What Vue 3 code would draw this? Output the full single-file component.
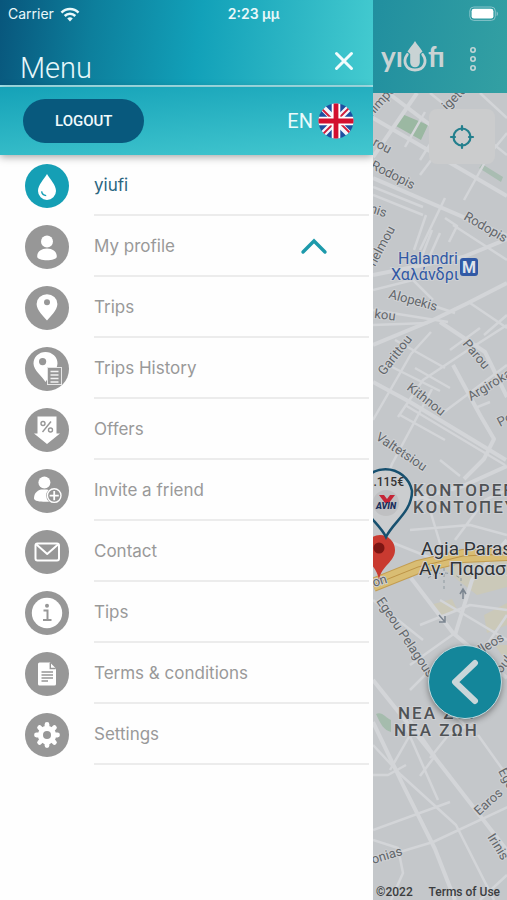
<template>
  <div class="page">
    <!-- Status Bar -->
    <div class="statusBar">
      <span class="carrier">
        Carrier
        <svg width="20" height="15" viewBox="0 0 20 15" fill="none" stroke="#e9f8fa" stroke-width="2.6">
          <path d="M1.5 5.6a12 12 0 0 1 17 0" />
          <path d="M4.7 9a7.5 7.5 0 0 1 10.6 0" />
          <path d="M10 14.4 7.2 11.5a4 4 0 0 1 5.6 0z" fill="#e9f8fa" stroke="none" />
        </svg>
      </span>
      <span class="clock">2:23 μμ</span>
      <svg class="battery" width="30" height="16" viewBox="0 0 30 16">
        <rect x="0.8" y="1" width="25.5" height="13.4" rx="4" fill="none" stroke="#86c3ca" />
        <rect x="2.6" y="2.8" width="21.8" height="9.8" rx="2.4" fill="#fff" />
        <path d="M27.6 5.4c1.8.6 1.8 4 0 4.6z" fill="#86c3ca" />
      </svg>
    </div>

    <!-- Drawer -->
    <aside class="drawer">
      <header class="drawerHeader">
        <h1>Menu</h1>
        <button class="iconButton" type="button" aria-label="Close menu">
          <svg width="20" height="20" viewBox="0 0 20 20" fill="none" stroke="#f2fcfd" stroke-width="3" stroke-linecap="round">
            <path d="M2.5 2.5l15 15M17.5 2.5l-15 15" />
          </svg>
        </button>
      </header>

      <div class="account">
        <button class="logout" type="button">LOGOUT</button>
        <button class="language" type="button">
          EN
          <svg width="36" height="36" viewBox="0 0 36 36">
            <clipPath id="flag"><circle cx="18" cy="18" r="17.5" /></clipPath>
            <g clip-path="url(#flag)">
              <path d="M0 0h36v36H0z" fill="#1d4fa0" />
              <path d="M2 2l32 32M34 2L2 34" stroke="#f3f6fb" stroke-width="6.4" />
              <path d="M3 5l12 12M21 19l13 13M33 3L21 15M15 21L3 33" stroke="#d01f3c" stroke-width="1.8" />
              <path d="M18 0v36M0 18h36" stroke="#fff" stroke-width="8.6" />
              <path d="M18 0v36M0 18h36" stroke="#d3102f" stroke-width="4.8" />
            </g>
          </svg>
        </button>
      </div>

      <nav>
        <ul class="menu">
          <li v-for="item in items" :key="item.icon">
            <svg class="menuIcon" :class="{ menuIconActive: item.active }" viewBox="0 0 44 44">
              <circle class="disc" cx="22" cy="22" r="22" />
              <g v-if="item.icon === 'drop'">
                <path class="glyph" d="M22 10c3 5 9 11 9 17a9 9 0 0 1-18 0c0-6 6-12 9-17z" />
                <path class="cut" d="M16.6 27.4c.4 2.6 2 4 4.6 4.2" />
              </g>
              <g v-else-if="item.icon === 'profile'" class="glyph">
                <circle cx="22" cy="16.4" r="6" />
                <path d="M12.2 31.5c0-5 4.2-8 9.8-8s9.8 3 9.8 8c0 5-19.6 5-19.6 0z" />
              </g>
              <g v-else-if="item.icon === 'pin'">
                <path class="glyph" d="M22 34.5c-3-4-10.4-10.4-10.4-16.6a10.4 9.6 0 0 1 20.8 0c0 6.2-7.4 12.6-10.4 16.6z" />
                <circle class="hole" cx="22" cy="16.2" r="3" />
              </g>
              <g v-else-if="item.icon === 'history'">
                <path class="glyph" d="M20.5 35c-3-5.5-12-11.5-12-18.5a12 11.5 0 0 1 24 0c0 7-9 13-12 18.5z" />
                <circle class="hole" cx="17.6" cy="14.6" r="3.6" />
                <rect x="22.5" y="20.5" width="14" height="17" fill="#979797" stroke="#e6e6e6" />
                <path d="M25.5 24.5h8M25.5 28h8M25.5 31.5h8M25.5 35h8" stroke="#f2f2f2" stroke-width="1.5" />
              </g>
              <g v-else-if="item.icon === 'offers'">
                <path class="glyph" d="M12.5 8.5h19v17H35L22 36 9 25.5h3.5z" />
                <g class="cut">
                  <circle cx="18" cy="15.5" r="2" />
                  <circle cx="25.5" cy="22" r="2" />
                  <path d="M26 13.5l-8.500 10.500" />
                </g>
              </g>
              <g v-else-if="item.icon === 'invite'">
                <circle class="glyph" cx="19.4" cy="13.6" r="6" />
                <path class="glyph" d="M9 29.5c0-5 2.5-7.5 7-9h6c3 1 5 2 7 5l-3 7c-6 .5-17 .5-17-3z" />
                <circle class="hole" cx="29.2" cy="26.6" r="8" />
                <circle cx="29.2" cy="26.6" r="6.8" fill="#979797" stroke="#fff" stroke-width="1.4" />
                <path d="M29.2 22v9.2M24.6 26.6h9.2" stroke="#fff" stroke-width="1.8" />
              </g>
              <g v-else-if="item.icon === 'contact'" fill="none" stroke="#fff" stroke-width="2" stroke-linejoin="round">
                <rect x="10.5" y="13.5" width="23.5" height="17" rx="2" />
                <path d="M11.5 14.5L22.2 24 33 14.5" />
              </g>
              <g v-else-if="item.icon === 'tips'">
                <circle class="glyph" cx="22" cy="22" r="15.2" />
                <circle class="hole" cx="22" cy="14.8" r="2" />
                <path d="M18.5 19.5h4v9M18 29h8.500" fill="none" stroke="#979797" stroke-width="2" />
              </g>
              <g v-else-if="item.icon === 'terms'">
                <path class="glyph" d="M14.5 10.5H25l6 6V32a1.5 1.5 0 0 1-1.5 1.5h-15A1.5 1.5 0 0 1 13 32V12a1.5 1.5 0 0 1 1.5-1.500z" />
                <path class="cut" d="M25.3 11v5.500h5.500M16.500 20H28M16.500 23H28M16.500 26H28M16.500 29H23" />
              </g>
              <g v-else>
                <path d="M22 11.500v21M11.500 22h21M14.600 14.600l14.800 14.800M29.400 14.600L14.600 29.400" stroke="#fff" stroke-width="4.800" stroke-linecap="round" />
                <circle class="glyph" cx="22" cy="22" r="9.200" />
                <circle class="hole" cx="22" cy="22" r="4" />
              </g>
            </svg>
            <button v-if="item.expandable" class="menuLabel" type="button" aria-expanded="false">
              {{ item.label }}
              <svg width="28" height="18" viewBox="0 0 28 18" fill="none" stroke="#1d9aab" stroke-width="3.4" stroke-linecap="round">
                <path d="M3 15L14 4l11 11" />
              </svg>
            </button>
            <a v-else class="menuLabel" :class="{ menuLabelActive: item.active }" href="#">{{ item.label }}</a>
          </li>
        </ul>
      </nav>
    </aside>

    <!-- Map behind the drawer -->
    <main class="content">
      <header class="appBar">
        <svg width="64" height="36" viewBox="0 0 64 36" role="img" aria-label="yiufi">
          <g class="logoText">
            <text x="0" y="26">yı</text>
            <text x="47" y="26">fı</text>
          </g>
          <path d="M34 0c2 3.500 5.500 7 7.500 10.500L38.800 13v8.500a4.800 4.800 0 0 1-9.600 0V13l-2.700-2.500C28.500 7 32 3.500 34 0z" fill="#c9d3d4" />
          <path d="M26.300 13.500c-5 7-1.500 15.500 7.700 15.500s12.700-8.500 7.700-15.500" fill="none" stroke="#c9d3d4" stroke-width="2.800" stroke-linecap="round" />
        </svg>
        <button class="iconButton" type="button" aria-label="More">
          <svg width="8" height="26" viewBox="0 0 8 26" fill="none" stroke="#c3d5d6" stroke-width="1.6">
            <circle cx="4" cy="4" r="2.200" />
            <circle cx="4" cy="13" r="2.200" />
            <circle cx="4" cy="22" r="2.200" />
          </svg>
        </button>
      </header>

      <div class="map">
        <svg class="mapCanvas" viewBox="373 93 134 807" preserveAspectRatio="xMinYMin slice">
          <path d="M396 126l6-12 26 11-7 15z" fill="#9bb8a2" />
          <path d="M482 164l21 13-2 5-22-14z" fill="#a9bdb2" />
          <path d="M376 714c6-3 10 4 15 6v12c-7-2-10-7-15-18z" fill="#a5bcad" />
          <path d="M440 565l67-8v30l-30 8-18-14zM430 605l22-6 6 12-18 6zM484 615l23-12v22l-20 8zM495 645h12v18z" fill="#cbc9b9" />
          <g class="roads">
            <path v-for="(road, i) in minorRoads" :key="i" :d="road" />
          </g>
          <g class="roads roadsWide">
            <path v-for="(road, i) in mainRoads" :key="i" :d="road" />
          </g>
          <path class="highwayEdge" d="M373 585l45-18 45-11 44-2" />
          <path class="highway" d="M373 585l45-18 45-11 44-2" />
          <path d="M373 585l45-18 45-11 44-2" fill="none" stroke="#bd9448" />
          <path d="M444 568v24M461 566v20M428 578q16-10 32 0" fill="none" stroke="#8f9aa0" stroke-dasharray="3 3" />
          <path d="M439 615l6 7m0-6v6h-6M463 599v-9m-3 4l3-5 3 5" fill="none" stroke="#7b8590" stroke-width="1.5" />

          <text
            v-for="street in streets"
            :key="street.name + street.x"
            class="street"
            :transform="`translate(${street.x} ${street.y}) rotate(${street.angle})`"
          >{{ street.name }}</text>

          <g class="metro">
            <text x="398" y="264">Halandri</text>
            <text x="391" y="280">Χαλάνδρι</text>
            <rect x="460" y="258" width="18" height="18" rx="3" />
            <text class="metroSign" x="469" y="273">M</text>
          </g>
          <g class="district">
            <text x="413" y="496">KONTOPEFKO</text>
            <text x="413" y="513">ΚΟΝΤΟΠΕΥΚΟ</text>
            <text x="398" y="719">NEA ZOI</text>
            <text x="394" y="736">ΝΕΑ ΖΩΗ</text>
          </g>
          <g class="suburb">
            <text x="421" y="555">Agia Paraskevi</text>
            <text x="419" y="575">Αγ. Παρασκευή</text>
          </g>

          <path d="M379 580c-2-14-14-18-14-30a15 15 0 0 1 30 0c0 12-14 16-16 30z" fill="#c93a30" />
          <circle cx="379" cy="548" r="5.500" fill="#7d1613" />
          <path d="M386 537c-7-15-27-25-27-46a27 27 0 0 1 53 0c0 21-19 31-26 46z" fill="#cbcdcf" stroke="#17506f" stroke-width="2.500" />
          <circle cx="386" cy="503" r="13" fill="#bfc0c2" />
          <path d="M379 495h5l3 4 3-4h5l-6 8h-4z" fill="#c52536" />
          <text class="brand" x="386" y="509">AVIN</text>
          <text class="price" x="404" y="486">1.115€</text>
        </svg>

        <button class="locate" type="button" aria-label="My location">
          <svg width="26" height="26" viewBox="0 0 26 26" fill="none" stroke="#237f8d" stroke-width="2.200" stroke-linecap="round">
            <circle cx="13" cy="13" r="8.500" />
            <path d="M13 2v4M13 20v4M2 13h4M20 13h4" />
          </svg>
        </button>
        <button class="back" type="button" aria-label="Back">
          <svg width="30" height="46" viewBox="0 0 30 46" fill="none" stroke="#c9d6d9" stroke-width="6" stroke-linecap="round" stroke-linejoin="round">
            <path d="M25 4L5 23l20 19" />
          </svg>
        </button>
        <footer class="mapFooter">
          <span>©2022</span>
          <a href="#">Terms of Use</a>
        </footer>
      </div>
    </main>
  </div>
</template>

<script setup>
const items = [
  { icon: "drop", label: "yiufi", active: true },
  { icon: "profile", label: "My profile", expandable: true },
  { icon: "pin", label: "Trips" },
  { icon: "history", label: "Trips History" },
  { icon: "offers", label: "Offers" },
  { icon: "invite", label: "Invite a friend" },
  { icon: "contact", label: "Contact" },
  { icon: "tips", label: "Tips" },
  { icon: "terms", label: "Terms & conditions" },
  { icon: "settings", label: "Settings" },
];

const mainRoads = [
  "M373 157l44-64",
  "M388 93l45 34",
  "M373 118l134 78",
  "M373 178l134 58",
  "M373 275l90-18 44-18",
  "M373 345l60-25 35-17 39-20",
  "M440 322l45 30 22 45",
  "M373 382l37 20 96 58",
  "M453 365l27 50 14 24-10 20-20 20",
  "M373 510l90-24 44-20",
  "M373 680l60 75 76 98 25 40",
  "M411 578l42 55 54 45",
  "M455 635l17-55 35-40",
  "M373 722l30 63 32 64 20 51",
];

const minorRoads = [
  "M405 147l20-35M420 175l30-40M455 105l-35 55M430 93l77 62M480 93l27 25",
  "M464 200l25-45 18-22M373 195l50 20M373 187l50 20M420 250l25-52",
  "M426 215l-12 35M432 230l-10 26M440 233l-12 27M445 218l12 8-8 16M453 225l54 35",
  "M373 290l40-10 20 20M373 310l75 12M373 325l55-2M395 293l60 20M470 303l37 25M484 335l23-20M450 350l30-22",
  "M373 420l38-66 20-22M388 365l52 26M395 340l50 28M398 417l25-37 45-30 39-25M415 368l35 20",
  "M432 389l-40 75-10 25M440 415l67-50M405 405l100 60M400 415l45 25M475 408l15-6M440 460l20 16",
  "M373 480l70 25M410 530l60-5 37 10M430 510l15 50M455 540l30-40 22-10M386 540l50 20",
  "M373 600l50 40M420 625l50-20 37 5M440 600l67 40M480 655l27-40M410 665l45-32M485 665v35M410 690l30-30 20-5",
  "M373 830l77-28M373 860l60-18 75-35M390 770l20-35M410 720l25 36-15 20M373 745l28 30 55 50 38 75M405 725l33 75",
  "M430 758l20-25 24-10M478 735l25 35M475 735l-20-20M373 775h15l18-10M373 840l25 8 5 25-12 27M480 900l27-25",
];

const streets = [
  { name: "nimpou", x: 372, y: 117, angle: -48 },
  { name: "igeto", x: 447, y: 111, angle: -45 },
  { name: "rou", x: 372, y: 145, angle: 28 },
  { name: "Rodopis", x: 370, y: 168, angle: 27 },
  { name: "Rodopis", x: 463, y: 219, angle: 30 },
  { name: "nis", x: 369, y: 212, angle: 18 },
  { name: "nelmou", x: 375, y: 267, angle: -62 },
  { name: "Alopekis", x: 388, y: 298, angle: 15 },
  { name: "kou", x: 374, y: 318, angle: 7 },
  { name: "Garittou", x: 384, y: 376, angle: -52 },
  { name: "Kithnou", x: 406, y: 389, angle: 38 },
  { name: "Parou", x: 462, y: 344, angle: 50 },
  { name: "Argirokastrou", x: 471, y: 401, angle: -31 },
  { name: "Po", x: 500, y: 427, angle: -28 },
  { name: "Valtetsiou", x: 375, y: 439, angle: 34 },
  { name: "on", x: 374, y: 587, angle: -18 },
  { name: "Egeou Pelagous", x: 376, y: 601, angle: 56 },
  { name: "illeos", x: 479, y: 656, angle: -32 },
  { name: "oulou", x: 501, y: 674, angle: -50 },
  { name: "Egeou", x: 498, y: 771, angle: 62 },
  { name: "Earos", x: 479, y: 816, angle: -42 },
  { name: "Irinis", x: 487, y: 837, angle: 58 },
  { name: "onias", x: 373, y: 864, angle: -17 },
];
</script>

<style>
body {
  margin: 0;
}
</style>

<style scoped>
.page {
  display: grid;
  grid-template-columns: minmax(0, 373fr) minmax(0, 134fr);
  font-family: "Roboto", "Liberation Sans", sans-serif;
  min-height: 100vh;
  overflow: hidden;
  position: relative;
}

button {
  background: none;
  border: 0;
  color: inherit;
  font-family: inherit;
  padding: 0;
}

a {
  color: inherit;
  text-decoration: none;
}

ul,
h1 {
  margin: 0;
  padding: 0;
}

svg {
  display: block;
  flex: none;
}

/* Status bar */
.statusBar {
  align-items: center;
  color: #e9f8fa;
  display: grid;
  font-family: "Inter", "Liberation Sans", sans-serif;
  font-size: 14px;
  grid-template-columns: 1fr auto 1fr;
  left: 0;
  line-height: 20px;
  padding: 4px 8px 0;
  position: absolute;
  right: 0;
  top: 0;
  z-index: 2;
}

.carrier {
  align-items: center;
  display: flex;
  gap: 6px;
}

.clock {
  font-weight: 600;
}

.battery {
  justify-self: end;
}

/* Drawer */
.drawer {
  background: #fefefe;
}

.drawerHeader {
  align-items: flex-end;
  background: linear-gradient(97deg, #08567c 0%, #0d7f9c 25%, #12a1b9 53%, #2db6c4 78%, #44cbd0 100%);
  border-bottom: 2px solid #a5e5ec;
  box-sizing: border-box;
  display: flex;
  height: 87px;
  justify-content: space-between;
  padding: 0 19px 0 20px;
}

.drawerHeader h1 {
  color: #e6f7fa;
  font-size: 29px;
  font-weight: 300;
  line-height: 34px;
}

.drawerHeader .iconButton {
  margin-bottom: 14px;
}

.account {
  align-items: center;
  background: linear-gradient(175deg, #15a2b8, #43c7cf);
  box-shadow: 0 2px 8px rgba(0, 0, 0, 0.35);
  display: flex;
  justify-content: space-between;
  padding: 12px 19px 12px 23px;
}

.logout {
  background: #08597d;
  border-radius: 22px;
  color: #f0fafc;
  font-size: 15px;
  font-weight: 500;
  line-height: 44px;
  padding: 0 32px;
}

.language {
  align-items: center;
  color: #e9fafb;
  display: flex;
  font-size: 20px;
  gap: 5px;
}

.menu {
  list-style: none;
}

.menu li {
  align-items: center;
  display: flex;
  gap: 25px;
  padding: 0 4px 0 25px;
}

.menuIcon {
  height: 44px;
  width: 44px;
}

.disc,
.hole {
  fill: #979797;
}

.glyph {
  fill: #fff;
}

.cut {
  fill: none;
  stroke: #979797;
  stroke-width: 1.4;
}

.menuIconActive .disc {
  fill: #159fb5;
}

.menuIconActive .cut {
  stroke: #159fb5;
}

.menuLabel {
  align-items: center;
  border-bottom: 2px solid #ececec;
  box-sizing: border-box;
  color: #999;
  display: flex;
  flex: 1;
  font-family: "Inter", "Liberation Sans", sans-serif;
  font-size: 17px;
  height: 61px;
  justify-content: space-between;
  line-height: 24px;
  padding-right: 41px;
}

.menuLabelActive {
  color: #2b6580;
}

/* App bar */
.content {
  display: flex;
  flex-direction: column;
}

.appBar {
  align-items: center;
  background: linear-gradient(100deg, #218f9f, #33a0a3);
  box-sizing: border-box;
  display: flex;
  gap: 24px;
  height: 93px;
  padding: 24px 8px 0;
}

.logoText {
  fill: #c9d3d4;
  font-family: "Lato", "Liberation Sans", sans-serif;
  font-size: 28px;
  font-weight: 700;
}

/* Map */
.map {
  background: #c4c7ca;
  flex: 1;
  min-height: 807px;
  overflow: hidden;
  position: relative;
}

.mapCanvas {
  height: 100%;
  inset: 0;
  position: absolute;
  width: 100%;
}

.roads {
  fill: none;
  stroke: #d3d5d8;
  stroke-linejoin: round;
  stroke-width: 2.5;
}

.roadsWide {
  stroke-width: 4;
}

.highwayEdge,
.highway {
  fill: none;
  stroke: #c39d52;
  stroke-width: 14;
}

.highway {
  stroke: #d9bd73;
  stroke-width: 12;
}

.street,
.metro,
.district,
.suburb {
  paint-order: stroke;
  stroke: #cfd1d4;
  stroke-width: 2px;
}

.street {
  fill: #62666a;
  font-size: 13px;
}

.metro {
  fill: #3159a5;
  font-size: 16px;
}

.metro rect {
  stroke: none;
}

.metroSign {
  fill: #dfe3ea;
  font-weight: 700;
  stroke: none;
  text-anchor: middle;
}

.district {
  fill: #4f5356;
  font-size: 17px;
  font-weight: 500;
  letter-spacing: 2px;
}

.suburb {
  fill: #303438;
  font-size: 19px;
}

.brand {
  fill: #1b2f5b;
  font-size: 9px;
  font-style: italic;
  font-weight: 900;
  text-anchor: middle;
}

.price {
  fill: #333;
  font-size: 12px;
  font-weight: 500;
  text-anchor: end;
}

.locate {
  align-items: center;
  background: #cbcccd;
  border-radius: 8px;
  display: flex;
  height: 55px;
  justify-content: center;
  position: absolute;
  right: 12px;
  top: 16px;
  width: 66px;
}

.back {
  align-items: center;
  background: #14869a;
  border: 1px solid #c3d9dd;
  border-radius: 50%;
  bottom: 181px;
  box-shadow: 0 2px 6px rgba(0, 0, 0, 0.4);
  box-sizing: border-box;
  display: flex;
  height: 74px;
  justify-content: center;
  position: absolute;
  right: 5px;
  width: 74px;
}

.mapFooter {
  bottom: 0;
  color: #3b3d40;
  display: flex;
  font-size: 12px;
  font-weight: 500;
  justify-content: space-between;
  left: 0;
  line-height: 16px;
  padding: 0 7px 0 3px;
  position: absolute;
  right: 0;
}
</style>
